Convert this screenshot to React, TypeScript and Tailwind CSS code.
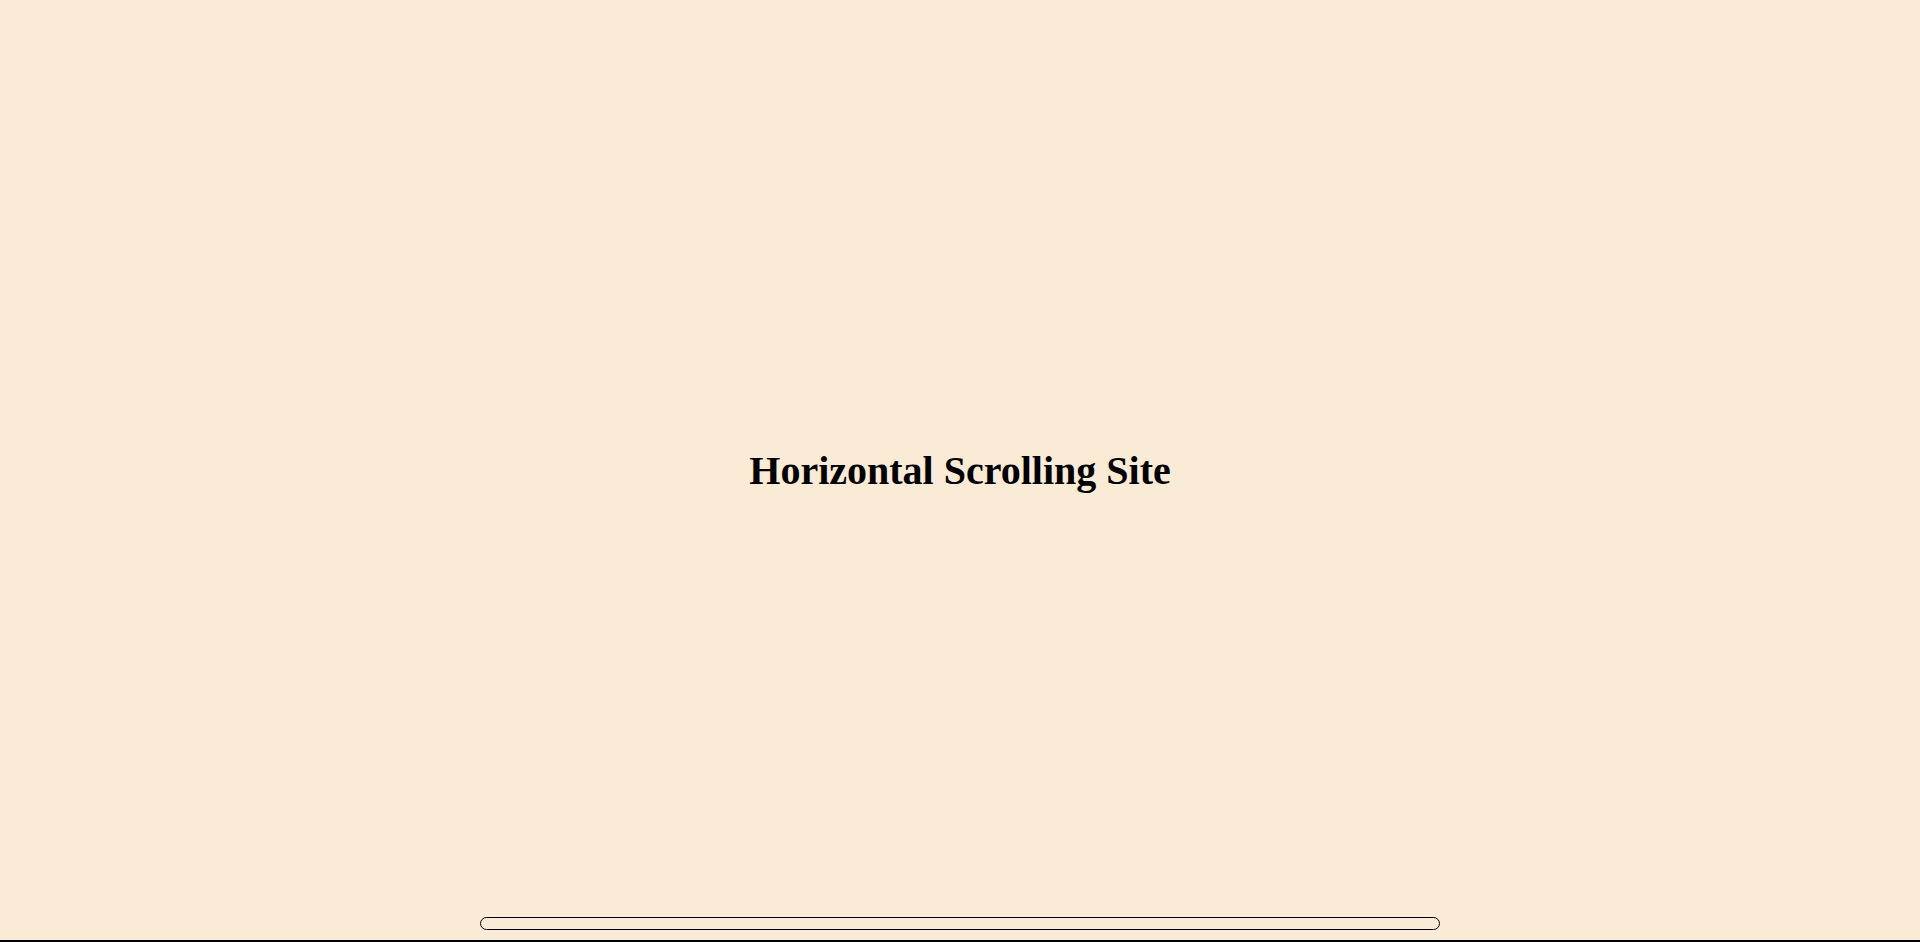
import React from 'react';

const App: React.FC = () => {
  return (
    <div className="h-[942px] w-full bg-[#faebd7] flex flex-col overflow-hidden font-['Liberation_Serif',serif] text-black">
      {/* Section */}
      <div className="h-[940px] relative flex items-center justify-center pt-[2px]">
        <h1 className="text-[40px] font-bold leading-none">Horizontal Scrolling Site</h1>

        {/* Progress track */}
        <div className="absolute left-[480px] top-[917px] w-[960px] h-[13px] rounded-full border border-black" />
      </div>
      <div className="h-[2px] bg-black" />
    </div>
  );
};

export default App;
